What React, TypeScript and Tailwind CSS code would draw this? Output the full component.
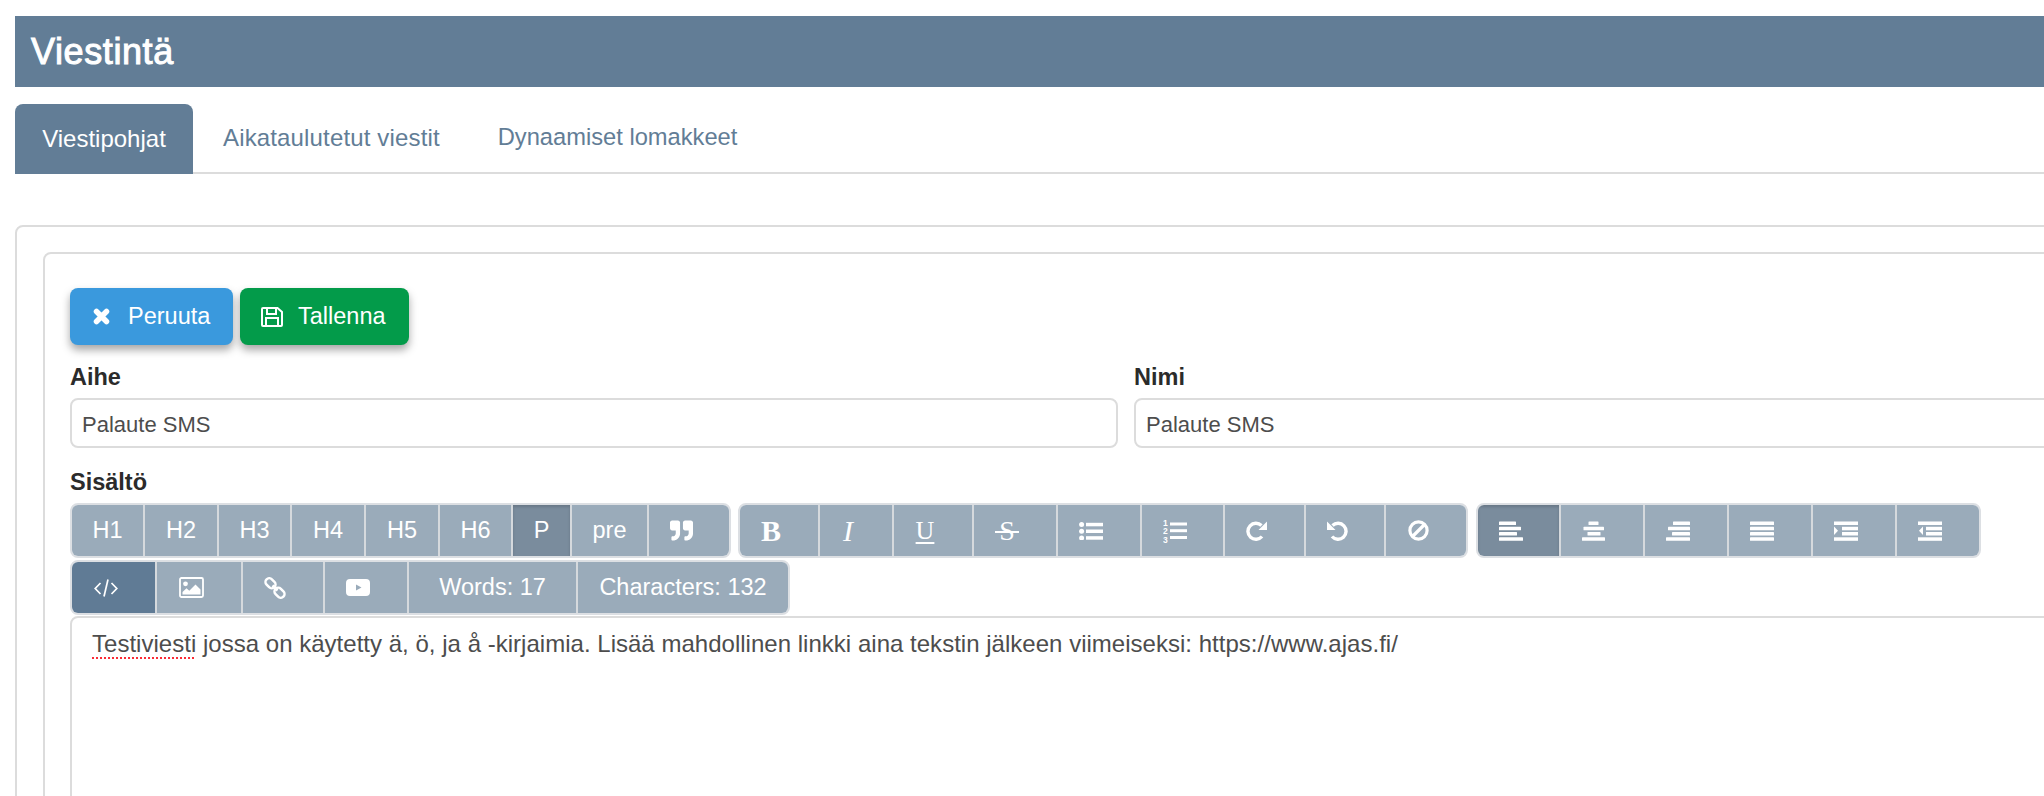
import React from "react";
import { FaQuoteRight } from "react-icons/fa";

const Bars = ({ rows }: { rows: number[][] }) => (
  <svg width="24" height="20" viewBox="0 0 24 20" fill="white">
    {rows.map((r, i) => (
      <rect key={i} x={r[0]} y={r[1]} width={r[2]} height="3.5" rx="0.6" />
    ))}
  </svg>
);

const alignLeft = [[0, 0.5, 17], [0, 5.8, 22], [0, 11, 18], [0, 16.3, 24]];
const alignCenter = [[6.500, 0.5, 10], [1.500, 5.8, 20.500], [5.500, 11, 13], [0, 16.3, 23]];
const alignRight = [[7, 0.5, 17], [2, 5.8, 22], [6, 11, 18], [0, 16.3, 24]];
const justify = [[0, 0.5, 24], [0, 5.8, 24], [0, 11, 24], [0, 16.3, 24]];

const IndentIcon = ({ out }: { out?: boolean }) => (
  <svg width="24" height="20" viewBox="0 0 24 20" fill="white">
    <rect x="0" y="0.5" width="24" height="3.5" />
    <rect x="8" y="5.8" width="16" height="3.5" />
    <rect x="8" y="11" width="16" height="3.5" />
    <rect x="0" y="16.3" width="24" height="3.5" />
    {out ? <path d="M5 5.500v8.500l-4-4.250z" /> : <path d="M0 5.500v8.500l4-4.250z" />}
  </svg>
);

const BulletIcon = () => (
  <svg width="24" height="18" viewBox="0 0 24 18" fill="white">
    <circle cx="2.6" cy="2.600" r="2.500" />
    <circle cx="2.6" cy="9.300" r="2.500" />
    <circle cx="2.6" cy="16" r="2.500" />
    <rect x="7" y="0.8" width="17" height="3.500" />
    <rect x="7" y="7.500" width="17" height="3.500" />
    <rect x="7" y="14.200" width="17" height="3.500" />
  </svg>
);

const NumberIcon = () => (
  <svg width="24" height="24" viewBox="0 0 24 24" fill="white">
    <text x="0" y="7" fontSize="8.5" fontWeight="bold" fontFamily="Liberation Sans, sans-serif">1</text>
    <text x="0" y="15" fontSize="8.5" fontWeight="bold" fontFamily="Liberation Sans, sans-serif">2</text>
    <text x="0" y="23.500" fontSize="8.5" fontWeight="bold" fontFamily="Liberation Sans, sans-serif">3</text>
    <rect x="7" y="3.500" width="17" height="3" />
    <rect x="7" y="10.200" width="17" height="3" />
    <rect x="7" y="17" width="17" height="3" />
  </svg>
);

const RedoIcon = ({ flip }: { flip?: boolean }) => (
  <svg width="21" height="20" viewBox="0 0 21 20" className={flip ? "-scale-x-100" : ""}>
    <path d="M16 15.500A8 8 0 1 1 15.500 4.500" fill="none" stroke="white" strokeWidth="3.400" />
    <path d="M21 0.500v8.500h-8.500z" fill="white" />
  </svg>
);

const BanIcon = () => (
  <svg width="21" height="21" viewBox="0 0 21 21" fill="none" stroke="white" strokeWidth="3.200">
    <circle cx="10.500" cy="10.500" r="8.600" />
    <path d="M5 16L16 5" />
  </svg>
);

const CodeIcon = () => (
  <svg width="24" height="18" viewBox="0 0 24 18" fill="none" stroke="white" strokeWidth="1.700">
    <path d="M6.500 4L1.200 9.500l5.300 5.500" />
    <path d="M17.500 4l5.300 5.500-5.300 5.500" />
    <path d="M14 0.500l-4 17" />
  </svg>
);

const ImageIcon = () => (
  <svg width="25" height="21" viewBox="0 0 25 21">
    <rect x="1" y="1" width="23" height="19" rx="1.500" fill="none" stroke="white" strokeWidth="1.800" />
    <circle cx="6.500" cy="6.800" r="2.400" fill="white" />
    <path d="M3.500 17.500v-2.500l4-3.800 2.800 2.600 6.200-6.300 5 5v5z" fill="white" />
  </svg>
);

const LinkIcon = () => (
  <svg width="22" height="22" viewBox="0 0 22 22" fill="none" stroke="white" strokeWidth="2.500">
    <rect x="1" y="2.500" width="11" height="7.500" rx="3.700" transform="rotate(45 6.500 6.250)" />
    <rect x="10" y="12" width="11" height="7.500" rx="3.700" transform="rotate(45 15.500 15.750)" />
    <path d="M8.500 8.500l5 5" />
  </svg>
);

const YoutubeIcon = () => (
  <svg width="24" height="17" viewBox="0 0 24 17">
    <path fillRule="evenodd" fill="white" d="M4 0h16a4 4 0 0 1 4 4v9a4 4 0 0 1-4 4H4a4 4 0 0 1-4-4V4a4 4 0 0 1 4-4zM10 5.500v6l5.500-3z" />
  </svg>
);

const CrossIcon = () => (
  <svg width="17" height="17" viewBox="0 0 17 17" fill="none" stroke="white" strokeWidth="5.500" strokeLinecap="round">
    <path d="M3.500 3.500l10 10M13.500 3.500l-10 10" />
  </svg>
);

const SaveIcon = () => (
  <svg width="22" height="20" viewBox="0 0 22 20" fill="none" stroke="white" strokeWidth="2">
    <path d="M2 1h14.500l4.500 4v13a1 1 0 0 1-1 1H2a1 1 0 0 1-1-1V2a1 1 0 0 1 1-1z" />
    <path d="M6 1v6h9V1" />
    <path d="M5 19v-8h12v8" />
  </svg>
);

const serif = "font-['Liberation_Serif',serif]";

type Tool = { w: string; label: React.ReactNode; active?: string };

const pressed = "bg-[#7a8c9d] shadow-[inset_0_2px_3px_rgba(0,0,0,0.15)]";

const headings: Tool[] = [
  { w: "w-[73px]", label: "H1" },
  { w: "w-[74px]", label: "H2" },
  { w: "w-[73px]", label: "H3" },
  { w: "w-[74px]", label: "H4" },
  { w: "w-[74px]", label: "H5" },
  { w: "w-[73px]", label: "H6" },
  { w: "w-[59px]", label: "P", active: pressed },
  { w: "w-[77px]", label: "pre" },
  { w: "w-[80px]", label: <FaQuoteRight className="size-[23px]" /> },
];

const formats: Tool[] = [
  { w: "w-[80px]", label: <span className={`${serif} text-[30px] font-bold`}>B</span> },
  { w: "w-[74px]", label: <span className={`${serif} text-[30px] italic`}>I</span> },
  { w: "w-[80px]", label: <span className={`${serif} text-[26px] underline decoration-2 underline-offset-[3px]`}>U</span> },
  {
    w: "w-[84px]",
    label: (
      <span className={`${serif} relative text-[28px]`}>
        S
        <span className="absolute top-1/2 -right-[4px] -left-[4px] h-[2px] bg-white" />
      </span>
    ),
  },
  { w: "w-[84px]", label: <BulletIcon /> },
  { w: "w-[83px]", label: <NumberIcon /> },
  { w: "w-[81px]", label: <RedoIcon /> },
  { w: "w-[80px]", label: <RedoIcon flip /> },
  { w: "w-[80px]", label: <BanIcon /> },
];

const aligns: Tool[] = [
  { w: "w-[83px]", label: <Bars rows={alignLeft} />, active: pressed },
  { w: "w-[84px]", label: <Bars rows={alignCenter} /> },
  { w: "w-[84px]", label: <Bars rows={alignRight} /> },
  { w: "w-[84px]", label: <Bars rows={justify} /> },
  { w: "w-[84px]", label: <IndentIcon /> },
  { w: "w-[82px]", label: <IndentIcon out /> },
];

const inserts: Tool[] = [
  { w: "w-[85px]", label: <CodeIcon />, active: "bg-[#607b95]" },
  { w: "w-[86px]", label: <ImageIcon /> },
  { w: "w-[82px]", label: <LinkIcon /> },
  { w: "w-[84px]", label: <YoutubeIcon /> },
  { w: "w-[169px]", label: "Words: 17" },
  { w: "w-[210px]", label: "Characters: 132" },
];

function ToolGroup({ tools }: { tools: Tool[] }) {
  return (
    <div className="flex h-[55px] overflow-hidden rounded-lg border-2 border-[#dcdfe3]">
      {tools.map((t, i) => (
        <div
          key={i}
          className={`flex shrink-0 items-center justify-center border-r-2 border-[#d5d9dd] text-[23.5px] text-white last:border-r-0 ${t.w} ${t.active ?? "bg-[#9aabba]"} ${typeof t.label === "string" ? "" : "pr-4"}`}
        >
          {t.label}
        </div>
      ))}
    </div>
  );
}

function Field({ label, width }: { label: string; width: string }) {
  return (
    <div className={`shrink-0 ${width}`}>
      <div className="h-[44px] pt-[17px] text-[23.5px] leading-[30px] font-bold text-[#2b2b2b]">{label}</div>
      <div className="mt-[9px] flex h-[50px] items-center rounded-lg border-2 border-[#dcdcdc] px-[10px] pt-[2px] text-[22px] text-[#4d4d4d]">
        Palaute SMS
      </div>
    </div>
  );
}

export default function App() {
  return (
    <div className="h-[796px] w-[2044px] overflow-hidden bg-white font-['Liberation_Sans',sans-serif]">
      <div className="w-[2300px] pt-4 pl-[15px]">
        <div className="flex h-[71px] items-center bg-[#627d96] pl-4 text-[36px] tracking-[0.6px] text-white [-webkit-text-stroke:1px_white]">Viestintä</div>

        <div className="mt-[17px] flex h-[70px] items-stretch border-b-2 border-[#dcdcdc] text-[24px] text-[#627d96]">
          <div className="-mb-[2px] flex w-[178px] items-center justify-center rounded-t-lg bg-[#627d96] text-white">Viestipohjat</div>
          <div className="flex items-center pr-[29px] pl-[30px] tracking-[0.15px]">Aikataulutetut viestit</div>
          <div className="flex items-center px-[29px] text-[23.7px]">Dynaamiset lomakkeet</div>
        </div>

        <div className="mt-[51px] rounded-lg border-2 border-[#dcdcdc] pt-[25px] pl-[26px]">
          <div className="h-[600px] rounded-lg border-2 border-[#dcdcdc] pt-[34px] pl-[25px]">
            <div className="flex gap-[7px] text-[23.5px] text-white">
              <button className="flex h-[57px] w-[163px] items-center gap-[18px] rounded-lg bg-[#3a99dd] pl-[23px] shadow-[0_5px_8px_rgba(0,0,0,0.35)]">
                <CrossIcon />
                Peruuta
              </button>
              <button className="flex h-[57px] w-[169px] items-center gap-[15px] rounded-lg bg-[#039b4a] pl-[21px] shadow-[0_5px_8px_rgba(0,0,0,0.35)]">
                <SaveIcon />
                Tallenna
              </button>
            </div>

            <div className="flex gap-[16px]">
              <Field label="Aihe" width="w-[1048px]" />
              <Field label="Nimi" width="w-[1000px]" />
            </div>

            <div className="mt-[8px] h-[47px] pt-[11px] text-[23.5px] leading-[30px] font-bold text-[#2b2b2b]">Sisältö</div>

            <div className="flex">
              <ToolGroup tools={headings} />
              <div className="ml-[7px]">
                <ToolGroup tools={formats} />
              </div>
              <div className="ml-[8px]">
                <ToolGroup tools={aligns} />
              </div>
            </div>
            <div className="mt-[2px] flex">
              <ToolGroup tools={inserts} />
            </div>

            <div className="mt-px h-[400px] rounded-lg border-2 border-[#dcdcdc] px-[20px] pt-[11px] text-[24px] leading-[30px] tracking-[0.02px] text-[#4d4d4d]">
              <span className="underline decoration-red-500 decoration-dotted decoration-2 underline-offset-[5px]">Testiviesti</span>{" "}
              jossa on käytetty ä, ö, ja å -kirjaimia. Lisää mahdollinen linkki aina tekstin jälkeen viimeiseksi: https://www.ajas.fi/
            </div>
          </div>
        </div>
      </div>
    </div>
  );
}
